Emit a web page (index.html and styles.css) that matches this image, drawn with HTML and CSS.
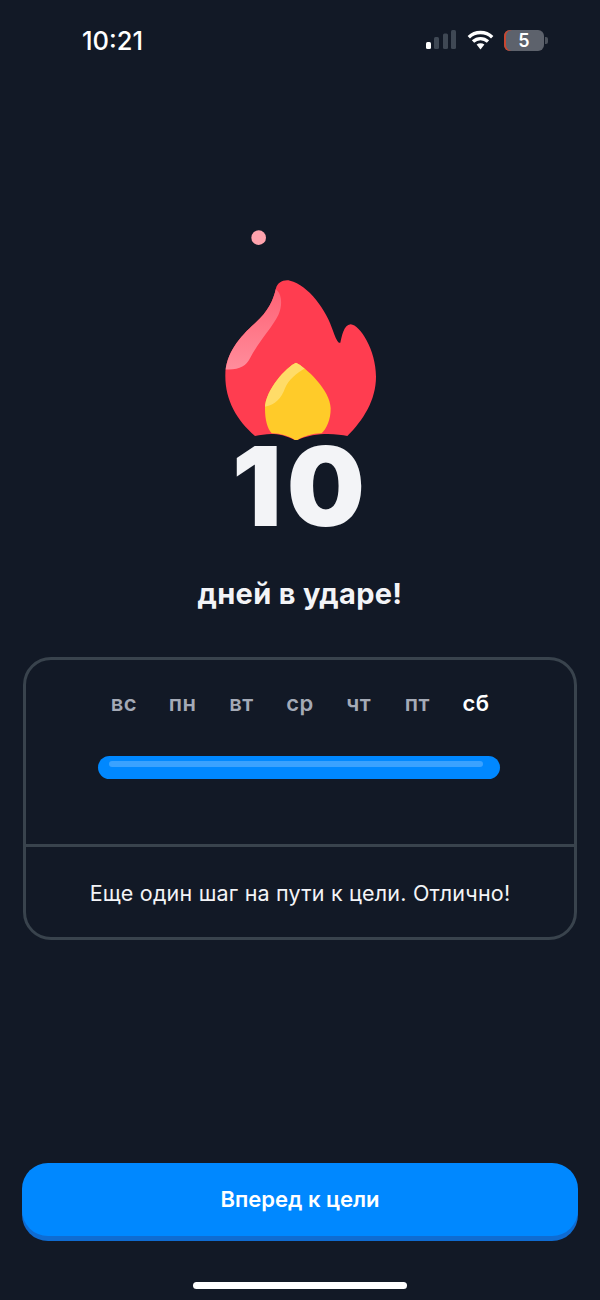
FILE: index.html
```html
<!DOCTYPE html>
<html lang="ru">
<head>
    <meta charset="UTF-8">
    <meta name="viewport" content="width=device-width, initial-scale=1.0">
    <title>Дней в ударе</title>
    <link rel="stylesheet" href="styles.css">
</head>
<body>
    <header class="status-bar">
        <span class="status-time">10:21</span>
        <div class="status-icons">
            <svg class="signal" width="30" height="20" viewBox="0 0 30 20">
                <rect x="0" y="12" width="5" height="7" rx="1.5" fill="#fff"></rect>
                <rect x="8" y="7" width="5" height="12" rx="1.5" fill="#3f4854"></rect>
                <rect x="17" y="3.5" width="5" height="15.5" rx="1.5" fill="#3f4854"></rect>
                <rect x="25" y="0" width="5" height="19" rx="1.5" fill="#3f4854"></rect>
            </svg>
            <svg class="wifi" width="27" height="20" viewBox="0 0 27 20" fill="none" stroke="#fff" stroke-width="3.4">
                <path d="M1.8 7.2C8.2 1 18.8 1 25.2 7.2"></path>
                <path d="M6 11.6C10.4 7.6 16.6 7.6 21 11.6"></path>
                <path d="M9.6 14.6C12 12.8 15 12.8 17.4 14.6L13.5 19.6Z" fill="#fff" stroke="none"></path>
            </svg>
            <div class="battery"><span class="battery-level">5</span></div>
        </div>
    </header>
    <main>
        <section class="hero">
            <svg class="flame" width="220" height="220" viewBox="0 0 660 660">
                <defs>
                    <clipPath id="flame-clip">
                        <path d="M195 648C140 600 105 540 106 465C107 400 150 350 195 310C235 275 250 240 258 205C262 188 280 178 300 182C355 195 410 270 430 335C437 355 445 372 451 368C456 350 460 315 482 313C510 315 558 390 558 470C558 540 520 600 472 648C440 640 370 635 318 662C270 635 230 640 195 648Z"></path>
                    </clipPath>
                    <clipPath id="drop-clip">
                        <path d="M318 428C345 440 422 510 422 565C422 600 410 625 395 640C365 640 340 650 318 662C300 650 275 640 245 640C232 625 225 600 225 565C225 510 290 440 318 428Z"></path>
                    </clipPath>
                    <linearGradient id="shine" x1="0" y1="0" x2="0" y2="1">
                        <stop offset="0" stop-color="#ff5f72"></stop>
                        <stop offset="1" stop-color="#ff8d9c"></stop>
                    </linearGradient>
                </defs>
                <circle cx="206" cy="53" r="22" fill="#ffa3ad"></circle>
                <path d="M195 648C140 600 105 540 106 465C107 400 150 350 195 310C235 275 250 240 258 205C262 188 280 178 300 182C355 195 410 270 430 335C437 355 445 372 451 368C456 350 460 315 482 313C510 315 558 390 558 470C558 540 520 600 472 648C440 640 370 635 318 662C270 635 230 640 195 648Z" fill="#ff3d50"></path>
                <path clip-path="url(#flame-clip)" d="M262 212C275 225 278 255 265 285C245 325 205 365 180 415C168 440 145 452 100 448L90 300L240 190Z" fill="url(#shine)"></path>
                <path d="M318 428C345 440 422 510 422 565C422 600 410 625 395 640C365 640 340 650 318 662C300 650 275 640 245 640C232 625 225 600 225 565C225 510 290 440 318 428Z" fill="#ffcb29"></path>
                <path clip-path="url(#drop-clip)" d="M345 445C320 460 295 480 285 505C275 535 255 555 225 560L220 440L320 420Z" fill="#ffdc68"></path>
            </svg>
            <div class="streak-count">10</div>
            <h1 class="streak-title">дней в ударе!</h1>
        </section>
        <section class="week-card">
            <div class="week-top">
                <div class="week-days">
                    <span>вс</span>
                    <span>пн</span>
                    <span>вт</span>
                    <span>ср</span>
                    <span>чт</span>
                    <span>пт</span>
                    <span class="today">сб</span>
                </div>
                <div class="week-bar"><div class="week-bar-shine"></div></div>
            </div>
            <p class="week-note">Еще один шаг на пути к цели. Отлично!</p>
        </section>
    </main>
    <footer class="bottom">
        <button type="button" class="next-btn">Вперед к цели</button>
        <div class="home-indicator"></div>
    </footer>
</body>
</html>
```

FILE: styles.css
```css
:root {
    --background: #121926;
    --line: #39434d;
    --primary: #0088ff;
    --primary-dark: #0f6cd2;
    --text-primary: #f3f4f7;
    --text-secondary: #a4aab6;
}
* {
    box-sizing: border-box;
}
body {
    background: var(--background);
    color: var(--text-primary);
    font-family: 'Inter', sans-serif;
    margin: 0;
    height: 1300px;
    display: flex;
    flex-direction: column;
    overflow: hidden;
}
.status-bar {
    height: 80px;
    padding: 0 56px 0 82px;
    display: flex;
    justify-content: space-between;
    align-items: center;
    flex-shrink: 0;
}
.status-time {
    color: #fff;
    font-size: 25.5px;
    font-weight: 500;
}
.status-icons {
    display: flex;
    align-items: center;
}
.wifi {
    margin-left: 11px;
}
.battery {
    position: relative;
    width: 40px;
    height: 21px;
    margin-left: 10px;
    background: #5d626c;
    border-radius: 6px;
    box-shadow: inset 2px 0 0 #c9452f;
    display: flex;
    justify-content: center;
    align-items: center;
}
.battery::after {
    content: "";
    position: absolute;
    right: -4px;
    top: 7px;
    width: 3px;
    height: 7px;
    background: #4c525c;
    border-radius: 0 2px 2px 0;
}
.battery-level {
    color: #fff;
    font-size: 18px;
    font-weight: 600;
}
main {
    flex: 1;
    padding: 140px 23px 0;
}
.hero {
    display: flex;
    flex-direction: column;
    align-items: center;
}
.flame {
    display: block;
}
.streak-count {
    font-size: 110px;
    font-weight: 900;
    line-height: 92px;
    letter-spacing: 5px;
    padding-left: 2px;
}
.streak-title {
    margin: 44px 0 0;
    font-size: 29px;
    font-weight: 700;
    line-height: 35px;
    letter-spacing: 0.3px;
}
.week-card {
    margin-top: 46px;
    border: 3px solid var(--line);
    border-radius: 28px;
}
.week-top {
    padding: 30px 0 65px;
    border-bottom: 3px solid var(--line);
}
.week-days {
    display: grid;
    grid-template-columns: repeat(7, 58.7px);
    justify-content: center;
    text-align: center;
    color: var(--text-secondary);
    font-size: 22px;
    font-weight: 600;
    line-height: 26px;
    letter-spacing: 0.4px;
}
.today {
    color: #fff;
}
.week-bar {
    width: 402px;
    height: 23px;
    margin: 40px 0 0 72px;
    padding: 5px 17px 0 11px;
    background: var(--primary);
    border-radius: 12px;
}
.week-bar-shine {
    height: 6px;
    background: #3aa2ff;
    border-radius: 3px;
}
.week-note {
    margin: 0;
    padding: 33px 0 31px;
    text-align: center;
    font-size: 21.5px;
    line-height: 26px;
    letter-spacing: 0.2px;
}
.bottom {
    padding: 0 22px;
    flex-shrink: 0;
}
.next-btn {
    display: block;
    width: 100%;
    height: 73px;
    padding: 0 0 2px;
    background: var(--primary);
    border: none;
    border-radius: 26px;
    box-shadow: 0 5px 0 var(--primary-dark);
    color: #fff;
    cursor: pointer;
    font-family: inherit;
    font-size: 22px;
    font-weight: 600;
}
.home-indicator {
    width: 214px;
    height: 7px;
    margin: 46px auto 11px;
    background: #fff;
    border-radius: 4px;
}
```
